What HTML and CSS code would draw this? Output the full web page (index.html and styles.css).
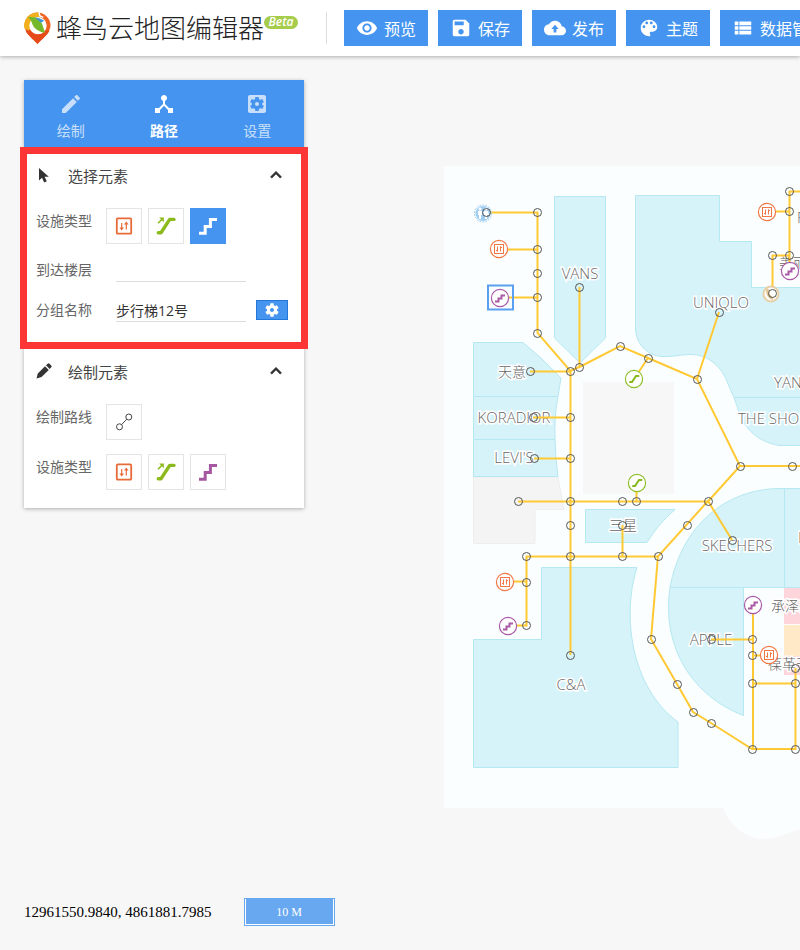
FILE: index.html
```html
<!DOCTYPE html>
<html lang="zh-CN">
<head>
    <meta charset="UTF-8">
    <meta name="viewport" content="width=device-width, initial-scale=1.0">
    <title>蜂鸟云地图编辑器</title>
    <link rel="stylesheet" href="styles.css">
</head>
<body>

<!-- Shared icons -->
<svg class="sprite" aria-hidden="true">
    <symbol id="i-lift" viewBox="0 0 20 20">
        <rect x="2.8" y="2.3" width="14.4" height="15.4" rx="1" fill="none" stroke="currentColor" stroke-width="1.8"/>
        <path d="M7.7 7v6M12.3 13.6v-6" stroke="currentColor" stroke-width="1.2"/>
        <path d="M5.4 11.4h4.6l-2.3 3zM10 8.600h4.6l-2.3-3z" fill="currentColor"/>
    </symbol>
    <symbol id="i-escalator" viewBox="0 0 20 20">
        <path d="M2.3 16.8H5L13.7 3.4H18" fill="none" stroke="currentColor" stroke-width="3.4" stroke-linecap="round" stroke-linejoin="round"/>
        <path d="M2 7.200l4-4" fill="none" stroke="currentColor" stroke-width="1.600"/>
        <path d="M3.200 1.600H7.800V6.200z" fill="currentColor"/>
    </symbol>
    <symbol id="i-stairs" viewBox="0 0 20 20">
        <path d="M1 17.2H7.2V10.4H12.4V3.4H19" fill="none" stroke="currentColor" stroke-width="3"/>
    </symbol>
    <symbol id="i-up" viewBox="0 0 24 24">
        <path d="M12 8l-6 6 1.41 1.41L12 10.83l4.59 4.58L18 14z" fill="currentColor" stroke="currentColor" stroke-width=".6"/>
    </symbol>
    <!-- Map pins -->
    <symbol id="m-lift" viewBox="0 0 20 20">
        <circle cx="10" cy="10" r="8.6" fill="#fff" stroke="#f07846" stroke-width="1.2"/>
        <rect x="5.5" y="5.5" width="9" height="9" fill="none" stroke="#f07846"/>
        <path d="M8.5 7.5v5M7 11l1.5 1.5M11.5 12.5v-5M13 9l-1.5-1.5" fill="none" stroke="#f07846"/>
    </symbol>
    <symbol id="m-stairs" viewBox="0 0 20 20">
        <circle cx="10" cy="10" r="8.6" fill="#fff" stroke="#a85aa6" stroke-width="1.2"/>
        <path d="M5 13.5h3.5v-3h3v-3H15" fill="none" stroke="#a85aa6" stroke-width="2"/>
    </symbol>
    <symbol id="m-escalator" viewBox="0 0 20 20">
        <circle cx="10" cy="10" r="8.6" fill="#fff" stroke="#8fbf2a" stroke-width="1.2"/>
        <path d="M6 13h2l4-6h2.500" fill="none" stroke="#86b81c" stroke-width="2" stroke-linecap="round"/>
    </symbol>
</svg>

<header class="topbar">
    <a class="brand" href="#">
        <svg class="brand-mark" viewBox="0 0 28 34" aria-hidden="true">
            <path d="M.5 14a13.500 13.500 0 0 1 27 0c0 7-8 12.500-13.500 19C8.500 26.500.5 21 .5 14z" fill="#ee6420"/>
            <path d="M1.500 19h25c-2 5-8 9-12.500 14C9.500 28 3.500 24 1.500 19z" fill="#e64a18"/>
            <path d="M.5 17A13.500 13.500 0 0 1 16 .6L17.500 6 5 19z" fill="#f2b01c"/>
            <circle cx="14.500" cy="14" r="9" fill="#fff"/>
            <path d="M4 5.500c6-1.500 11 .5 13.500 4.500 2.500 4 2.500 7.500 4.500 11.500-5-1-11-3.500-13-8.500C8 10.500 7.500 7.500 4 5.500z" fill="#76b82c"/>
            <path d="M11.500 5.500c4 .2 6 1.500 9.500 3.500L17.500 11z" fill="#3f95d8"/>
            <path d="M15.500 0l1 4 3.500 1.500" fill="none" stroke="#fff" stroke-width="1.5"/>
        </svg>
        <span class="brand-name">蜂鸟云地图编辑器</span>
        <span class="beta">Beta</span>
    </a>
    <div class="actions">
        <button type="button" class="action"><svg viewBox="0 0 24 24" aria-hidden="true"><path d="M12 4.5C7 4.5 2.73 7.61 1 12c1.73 4.39 6 7.5 11 7.5s9.27-3.11 11-7.5c-1.73-4.39-6-7.5-11-7.5zM12 17c-2.76 0-5-2.24-5-5s2.24-5 5-5 5 2.24 5 5-2.24 5-5 5zm0-8c-1.66 0-3 1.34-3 3s1.34 3 3 3 3-1.34 3-3-1.34-3-3-3z"/></svg>预览</button>
        <button type="button" class="action"><svg viewBox="0 0 24 24" aria-hidden="true"><path d="M17 3H5c-1.11 0-2 .9-2 2v14c0 1.1.89 2 2 2h14c1.1 0 2-.9 2-2V7l-4-4zm-5 16c-1.66 0-3-1.34-3-3s1.34-3 3-3 3 1.34 3 3-1.34 3-3 3zm3-10H5V5h10v4z"/></svg>保存</button>
        <button type="button" class="action"><svg viewBox="0 0 24 24" aria-hidden="true"><path d="M19.35 10.04C18.67 6.59 15.64 4 12 4 9.11 4 6.6 5.64 5.35 8.04 2.34 8.36 0 10.91 0 14c0 3.31 2.69 6 6 6h13c2.76 0 5-2.24 5-5 0-2.64-2.05-4.78-4.65-4.96zM13.5 13v4h-3v-4H8l4-4.500 4 4.500h-2.500z"/></svg>发布</button>
        <button type="button" class="action"><svg viewBox="0 0 24 24" aria-hidden="true"><path d="M12 3c-4.97 0-9 4.03-9 9s4.03 9 9 9c.83 0 1.5-.67 1.5-1.5 0-.39-.15-.74-.39-1.01-.23-.26-.38-.61-.38-.99 0-.83.67-1.5 1.5-1.5H16c2.76 0 5-2.24 5-5 0-4.42-4.03-8-9-8zm-5.5 9c-.83 0-1.5-.67-1.5-1.5S5.67 9 6.5 9 8 9.67 8 10.5 7.33 12 6.5 12zm3-4C8.67 8 8 7.33 8 6.5S8.67 5 9.5 5s1.5.67 1.5 1.5S10.33 8 9.5 8zm5 0c-.83 0-1.5-.67-1.5-1.5S13.67 5 14.5 5s1.5.67 1.5 1.5S15.33 8 14.5 8zm3 4c-.83 0-1.5-.67-1.5-1.5S16.67 9 17.5 9s1.5.67 1.5 1.5-.67 1.5-1.5 1.5z"/></svg>主题</button>
        <button type="button" class="action"><svg viewBox="0 0 24 24" aria-hidden="true"><path d="M3 14h4v-4H3v4zm0 5h4v-4H3v4zM3 9h4V5H3v4zm5 5h13v-4H8v4zm0 5h13v-4H8v4zM8 5v4h13V5H8z"/></svg>数据管理</button>
    </div>
</header>

<main class="workspace">
    <!-- Floor map -->
    <svg class="map" role="img" aria-label="楼层地图">
        <g transform="translate(0 -56)">
            <path class="floor" d="M444 166H2000V808H830C812 826 788 836 765 839C745 840 730 824 723 808H444z"/>
            <rect class="void" x="583" y="382" width="91" height="112"/>
            <path class="blank" d="M473.5 477H558L564 509.5H535V543.5H473.5z"/>
            <g class="shop">
                <path d="M554.5 196.5H605.5V338L580 363L554.5 338z"/>
                <path d="M635.5 195.5H719.5V241.5H751.5V287.5H2000V397.5H734L728 384C722 366 707 354 690 354.5C676 355 674 357 662 356.5C648 356 635.5 344 635.5 328z"/>
                <path d="M734 397.5H2000V445.5H780C756 442 745 427 740 415z"/>
                <path d="M473.5 342.5H523L541 358L561 378L558 396.5H473.5z"/>
                <path d="M473.5 396.5H558Q554 416 555 439.5H473.5z"/>
                <path d="M473.5 439.5H555Q555.5 460 558 476.5H473.5z"/>
                <path d="M585.5 509.5H675Q658 524 647 542.5H585.5z"/>
                <path d="M784.5 488.5C725 487 681 527 670 587.5H784.5z"/>
                <path d="M784.5 488.5H2000V587.5H784.5z"/>
                <path d="M670 587.5H743.5V715.5C695 697 661 650 670 587.5z"/>
                <path d="M541.5 567.5H637C622 614 630 687 678 722V767.5H473.5V639.5H541.5z"/>
            </g>
            <path fill="#ffd5dc" d="M784 588h400v36H784zM784 656h400v19H784z"/>
            <path fill="#ffe9c7" d="M784 625h400v31H784z"/>

            <g class="names">
                <text x="580" y="279">VANS</text>
                <text x="721" y="308">UNIQLO</text>
                <text class="cn" x="512" y="377">天意</text>
                <text x="514" y="423">KORADIOR</text>
                <text x="514" y="463">LEVI'S</text>
                <text class="cn" x="623" y="530">三星</text>
                <text x="737" y="551">SKECHERS</text>
                <text x="711" y="645">APPLE</text>
                <text x="571" y="690">C&amp;A</text>
                <text class="from" x="774" y="388">YANG</text>
                <text class="from" x="738" y="424">THE SHOES</text>
                <text class="from" x="797" y="223">F</text>
                <text class="from" x="798" y="543">H</text>
                <text class="from cn" x="779" y="268">美丽</text>
                <text class="from cn" x="771" y="611">承泽茶</text>
                <text class="from cn" x="768" y="669">葆革天</text>
            </g>

            <g class="routes">
                <path d="M486 212.5H537.5V333L570.5 371V655M499 249.5H537M500 297.5H537"/>
                <path d="M579.5 287V367L620 346L648 358L697 379L740 466H2000M570 371L579 367M719 312L697 379M648 358L634 379"/>
                <path d="M530 371.5H570M533 417.5H570M534 458.5H570M518 501.5H708L740 466M636.5 483V501M732 540L708 501L658 556.5H526.5V625.5H508M505 581.5H526M622.5 525V556"/>
                <path d="M658 556L651 639L677 684L693 712L711 723L752 749H795.5V668M753 605V749M711 639.5H752M752 655.5H769M752 683.5H795"/>
                <path d="M2000 191.5H789.5V271M767 211.5H789M789 255.5H772.5V293"/>
            </g>

            <g class="amenity">
                <circle cx="483" cy="213.5" r="7.500" fill="#9fcdf0"/>
                <circle cx="483" cy="213.5" r="8.500" fill="none" stroke="#9fcdf0" stroke-dasharray="2 1"/>
                <path fill="#fff" d="M478 211h4v4h-1v4h-2v-4h-1zM484 211h4l1 4h-2v4h-2v-4h-2z"/>
                <circle cx="480" cy="209" r="1.5" fill="#fff"/><circle cx="486" cy="209" r="1.5" fill="#fff"/>
                <circle cx="771" cy="294" r="7.5" fill="#fff" stroke="#e8cfa5" stroke-width="2"/>
                <path d="M768 289q-2 6 5 10" fill="none" stroke="#e3c795" stroke-width="3"/>
            </g>
            <use href="#m-lift" x="489" y="239" width="20" height="20"/>
            <use href="#m-lift" x="757" y="202" width="20" height="20"/>
            <use href="#m-lift" x="495" y="572" width="20" height="20"/>
            <use href="#m-lift" x="759" y="645" width="20" height="20"/>
            <use href="#m-stairs" x="490" y="288" width="20" height="20"/>
            <use href="#m-stairs" x="780" y="261" width="20" height="20"/>
            <use href="#m-stairs" x="498" y="616" width="20" height="20"/>
            <use href="#m-stairs" x="743" y="595" width="20" height="20"/>
            <use href="#m-escalator" x="624" y="369" width="20" height="20"/>
            <use href="#m-escalator" x="627" y="473" width="20" height="20"/>
            <rect class="picked" x="488" y="285.5" width="25" height="24"/>
            <g class="nodes" id="nodes"></g>
        </g>
    </svg>

    <aside class="panel">
        <nav class="tabs">
            <button type="button" class="tab"><svg viewBox="0 0 24 24" aria-hidden="true"><path d="M3 17.25V21h3.75L17.81 9.94l-3.75-3.75L3 17.25zM20.71 7.04c.39-.39.39-1.02 0-1.41l-2.34-2.34c-.39-.39-1.02-.39-1.41 0l-1.83 1.83 3.75 3.75 1.83-1.83z"/></svg>绘制</button>
            <button type="button" class="tab active"><svg viewBox="0 0 24 24" aria-hidden="true"><path d="M17 16l-4-4V8.82C14.16 8.4 15 7.3 15 6c0-1.66-1.34-3-3-3S9 4.34 9 6c0 1.3.84 2.4 2 2.82V12l-4 4H3v5h5v-3.05l4-4.2 4 4.2V21h5v-5h-4z"/></svg>路径</button>
            <button type="button" class="tab"><svg viewBox="0 0 24 24" aria-hidden="true"><path d="M12 10c-1.1 0-2 .9-2 2s.9 2 2 2 2-.9 2-2-.9-2-2-2zm7-7H5c-1.11 0-2 .9-2 2v14c0 1.1.89 2 2 2h14c1.11 0 2-.9 2-2V5c0-1.1-.89-2-2-2zm-1.75 9c0 .23-.02.46-.05.68l1.48 1.16c.13.11.17.3.08.45l-1.4 2.42c-.09.15-.27.21-.43.15l-1.74-.7c-.36.28-.76.51-1.18.69l-.26 1.85c-.03.17-.18.3-.35.3h-2.8c-.17 0-.32-.13-.35-.29l-.26-1.85c-.43-.18-.82-.41-1.18-.69l-1.74.7c-.16.06-.34 0-.43-.15l-1.4-2.42c-.09-.15-.05-.34.08-.45l1.48-1.16c-.03-.23-.05-.46-.05-.69 0-.23.02-.46.05-.68l-1.48-1.16c-.13-.11-.17-.3-.08-.45l1.4-2.42c.09-.15.27-.21.43-.15l1.74.7c.36-.28.76-.51 1.18-.69l.26-1.85c.03-.17.18-.3.35-.3h2.8c.17 0 .32.13.35.29l.26 1.85c.43.18.82.41 1.18.69l1.74-.7c.16-.06.34 0 .43.15l1.4 2.42c.09.15.05.34-.08.45l-1.48 1.16c.03.23.05.46.05.69z"/></svg>设置</button>
        </nav>

        <!-- Select element -->
        <section class="group highlighted">
            <button type="button" class="group-title" aria-expanded="true">
                <svg class="lead" viewBox="0 0 16 16" aria-hidden="true"><path d="M3 1v12.500l3-2.700 2.200 4.700 2.600-1.200-2.200-4.600h4.200z" fill="currentColor"/></svg>
                <span>选择元素</span>
                <svg class="chevron" aria-hidden="true"><use href="#i-up"/></svg>
            </button>
            <div class="row">
                <span class="label">设施类型</span>
                <div class="tools">
                    <button type="button" class="tool lift" aria-label="电梯"><svg aria-hidden="true"><use href="#i-lift"/></svg></button>
                    <button type="button" class="tool escalator" aria-label="扶梯"><svg aria-hidden="true"><use href="#i-escalator"/></svg></button>
                    <button type="button" class="tool stairs selected" aria-label="步行梯" aria-pressed="true"><svg aria-hidden="true"><use href="#i-stairs"/></svg></button>
                </div>
            </div>
            <div class="row field">
                <label class="label" for="floors">到达楼层</label>
                <input type="text" id="floors">
            </div>
            <div class="row field">
                <label class="label" for="groupName">分组名称</label>
                <input type="text" id="groupName" value="步行梯12号">
                <button type="button" class="gear" aria-label="分组设置"><svg viewBox="0 0 24 24" aria-hidden="true"><path d="M19.43 12.98c.04-.32.07-.64.07-.98s-.03-.66-.07-.98l2.11-1.65c.19-.15.24-.42.12-.64l-2-3.46c-.12-.22-.39-.3-.61-.22l-2.49 1c-.52-.4-1.08-.73-1.69-.98l-.38-2.65C14.46 2.18 14.25 2 14 2h-4c-.25 0-.46.18-.49.42l-.38 2.65c-.61.25-1.17.59-1.69.98l-2.49-1c-.23-.09-.49 0-.61.22l-2 3.46c-.13.22-.07.49.12.64l2.11 1.65c-.04.32-.07.65-.07.98s.03.66.07.98l-2.11 1.65c-.19.15-.24.42-.12.64l2 3.46c.12.22.39.3.61.22l2.49-1c.52.4 1.08.73 1.69.98l.38 2.65c.03.24.24.42.49.42h4c.25 0 .46-.18.49-.42l.38-2.65c.61-.25 1.17-.59 1.69-.98l2.49 1c.23.09.49 0 .61-.22l2-3.46c.12-.22.07-.49-.12-.64l-2.11-1.65zM12 15c-1.66 0-3-1.34-3-3s1.34-3 3-3 3 1.340 3 3-1.340 3-3 3z"/></svg></button>
            </div>
        </section>

        <!-- Draw element -->
        <section class="group">
            <button type="button" class="group-title" aria-expanded="true">
                <svg class="lead" viewBox="0 0 16 16" aria-hidden="true"><path d="M.5 15.5l1.300-5L9 3.300l3.800 3.800-7.300 7zM10 2.300l1.700-1.600q1-.8 2 .2l1.500 1.500q.9 1 0 1.900L13.700 6z" fill="currentColor"/></svg>
                <span>绘制元素</span>
                <svg class="chevron" aria-hidden="true"><use href="#i-up"/></svg>
            </button>
            <div class="row">
                <span class="label">绘制路线</span>
                <div class="tools">
                    <button type="button" class="tool" aria-label="路线"><svg viewBox="0 0 20 20" aria-hidden="true"><g fill="none" stroke="#444"><circle cx="5.5" cy="14.800" r="3"/><circle cx="14.800" cy="5" r="3"/><path d="M7.600 12.600l5.100-5.400"/></g></svg></button>
                </div>
            </div>
            <div class="row">
                <span class="label">设施类型</span>
                <div class="tools">
                    <button type="button" class="tool lift" aria-label="电梯"><svg aria-hidden="true"><use href="#i-lift"/></svg></button>
                    <button type="button" class="tool escalator" aria-label="扶梯"><svg aria-hidden="true"><use href="#i-escalator"/></svg></button>
                    <button type="button" class="tool stairs" aria-label="步行梯"><svg aria-hidden="true"><use href="#i-stairs"/></svg></button>
                </div>
            </div>
        </section>
    </aside>

    <footer class="status">
        <span class="coords">12961550.9840, 4861881.7985</span>
        <span class="scale">10 M</span>
    </footer>
</main>

<script>
// Path nodes, in map coordinates
const NODES = [
    [486, 212], [537, 212], [537, 249], [537, 273], [537, 297], [537, 333],
    [570, 371], [579, 367], [579, 287], [620, 346], [648, 358], [697, 379],
    [719, 312], [530, 371], [570, 417], [533, 417], [570, 458], [534, 458],
    [570, 501], [518, 501], [622, 501], [636, 501], [708, 501], [570, 525],
    [570, 556], [526, 556], [526, 582], [526, 625], [570, 655], [622, 556],
    [622, 525], [658, 556], [687, 525], [740, 466], [792, 466], [732, 540],
    [651, 639], [677, 684], [693, 712], [711, 723], [752, 749], [795, 749],
    [752, 683], [795, 683], [752, 655], [752, 639], [711, 639], [795, 668],
    [789, 191], [789, 211], [789, 255], [772, 255], [772, 293]
];

const layer = document.getElementById("nodes");
NODES.forEach(([x, y]) => {
    const dot = document.createElementNS("http://www.w3.org/2000/svg", "circle");
    dot.setAttribute("cx", x + 0.5);
    dot.setAttribute("cy", y + 0.5);
    dot.setAttribute("r", 4);
    layer.appendChild(dot);
});
</script>

</body>
</html>
```

FILE: styles.css
```css
* {
    box-sizing: border-box;
}
body {
    margin: 0;
    height: 100vh;
    display: flex;
    flex-direction: column;
    overflow: hidden;
    background-color: #f7f7f7;
    color: #444;
    font-family: "Open Sans", "Noto Sans CJK SC", sans-serif;
    font-size: 14px;
}
button, input {
    font: inherit;
    color: inherit;
    margin: 0;
    padding: 0;
    border: 0;
    background: none;
    border-radius: 0;
}
button {
    cursor: pointer;
}
.sprite {
    position: absolute;
    width: 0;
    height: 0;
}

/* Top bar */
.topbar {
    flex: none;
    display: flex;
    align-items: center;
    height: 56px;
    padding-left: 24px;
    background-color: #fff;
    box-shadow: 0 1px 4px rgba(0, 0, 0, 0.3);
    z-index: 2;
}
.brand {
    flex: none;
    display: flex;
    align-items: center;
    color: #222;
    text-decoration: none;
}
.brand-mark {
    width: 27px;
    height: 33px;
    margin-right: 5px;
}
.brand-name {
    font-size: 26px;
    font-weight: 300;
    line-height: 40px;
    white-space: nowrap;
}
.beta {
    align-self: flex-start;
    width: 34px;
    height: 13px;
    margin-top: 8px;
    border-radius: 7px;
    background-color: #a5cc4a;
    color: #fff;
    font-size: 12px;
    font-style: italic;
    font-weight: 600;
    line-height: 12px;
    text-align: center;
}
.actions {
    position: relative;
    flex: none;
    display: flex;
    gap: 10px;
    margin-left: 28px;
    padding-left: 18px;
}
.actions::before {
    content: "";
    position: absolute;
    left: 0;
    top: 2px;
    width: 1px;
    height: 32px;
    background-color: #ddd;
}
.action {
    flex: none;
    display: flex;
    align-items: center;
    gap: 6px;
    height: 36px;
    padding: 0 12px;
    background-color: #4595f0;
    color: #fff;
    font-size: 16px;
    white-space: nowrap;
}
.action svg {
    width: 22px;
    height: 22px;
    fill: #fff;
}

/* Map */
.workspace {
    flex: 1;
    position: relative;
    display: flex;
    flex-direction: column;
    align-items: flex-start;
    justify-content: space-between;
    padding: 24px;
}
.map {
    position: absolute;
    inset: 0;
    width: 100%;
    height: 100%;
}
.floor {
    fill: #fbfeff;
}
.void {
    fill: #f7f7f7;
}
.blank {
    fill: #f4f4f4;
    stroke: #eee;
}
.shop path {
    fill: #d6f3f9;
    stroke: #b5e8f1;
}
.names text {
    fill: #666;
    stroke: #fff;
    stroke-width: 3px;
    paint-order: stroke;
    font-size: 15px;
    font-weight: 300;
    text-anchor: middle;
}
.names .cn {
    font-size: 14px;
}
.names .from {
    text-anchor: start;
}
.routes path {
    fill: none;
    stroke: #ffc933;
    stroke-width: 2px;
}
.nodes circle {
    fill: none;
    stroke: #555;
    stroke-width: 1px;
}
.picked {
    fill: none;
    stroke: #5a9ff0;
    stroke-width: 2px;
}

/* Side panel */
.panel {
    position: relative;
    width: 280px;
    background-color: #fff;
    box-shadow: 0 1px 4px rgba(0, 0, 0, 0.3);
}
.tabs {
    display: flex;
    height: 68px;
    background-color: #4595f0;
}
.tab {
    flex: 1;
    display: flex;
    flex-direction: column;
    align-items: center;
    gap: 5px;
    padding-top: 12px;
    color: #fff;
    line-height: 20px;
    opacity: 0.7;
}
.tab svg {
    width: 24px;
    height: 24px;
    fill: #fff;
}
.tab.active {
    font-weight: bold;
    opacity: 1;
}
.group {
    position: relative;
    display: flex;
    flex-direction: column;
    gap: 14px;
    padding: 0 12px 18px;
}
.highlighted {
    padding-bottom: 22px;
}
.highlighted::after {
    content: "";
    position: absolute;
    inset: -1px -4px -5px;
    border: 7px solid #fc3535;
    pointer-events: none;
}
.group-title {
    display: flex;
    align-items: center;
    height: 54px;
    margin-bottom: -8px;
    font-size: 15px;
    text-align: left;
}
.group-title span {
    flex: 1;
    margin-left: 16px;
}
.lead {
    width: 16px;
    height: 16px;
    color: #333;
}
.chevron {
    width: 22px;
    height: 22px;
    margin-right: 5px;
    color: #333;
}
.row {
    display: flex;
    align-items: flex-start;
}
.label {
    width: 70px;
    color: #666;
    line-height: 26px;
}
.tools {
    display: flex;
    gap: 6px;
}
.tool {
    display: flex;
    align-items: center;
    justify-content: center;
    width: 36px;
    height: 36px;
    border: 1px solid #e4e4e4;
    background-color: #fff;
}
.tool svg {
    width: 20px;
    height: 20px;
}
.lift {
    color: #e76b39;
}
.escalator {
    color: #8cba1c;
}
.stairs {
    color: #a657a2;
}
.tool.selected {
    border-color: #4595f0;
    background-color: #4595f0;
    color: #fff;
}
.field {
    height: 24px;
    align-items: center;
}
.field .label {
    width: 80px;
}
.field input {
    width: 130px;
    height: 24px;
    border-bottom: 1px solid #ddd;
    color: #333;
    outline: none;
}
.field + .field {
    margin-top: 2px;
}
.gear {
    display: flex;
    align-items: center;
    justify-content: center;
    width: 32px;
    height: 20px;
    margin-left: 10px;
    border: 1px solid #2277d8;
    background-color: #4595f0;
}
.gear svg {
    width: 16px;
    height: 16px;
    fill: #fff;
}

/* Status line */
.status {
    position: relative;
    display: flex;
    align-items: center;
    gap: 32px;
    color: #000;
    font-family: "Liberation Serif", serif;
    font-size: 15px;
}
.scale {
    width: 91px;
    height: 28px;
    border: 1px solid #68a8f0;
    background-color: #68a8f0;
    box-shadow: inset 1px -1px #fff, inset -1px 0 #fff;
    color: #fff;
    font-size: 12px;
    line-height: 26px;
    text-align: center;
}
```
